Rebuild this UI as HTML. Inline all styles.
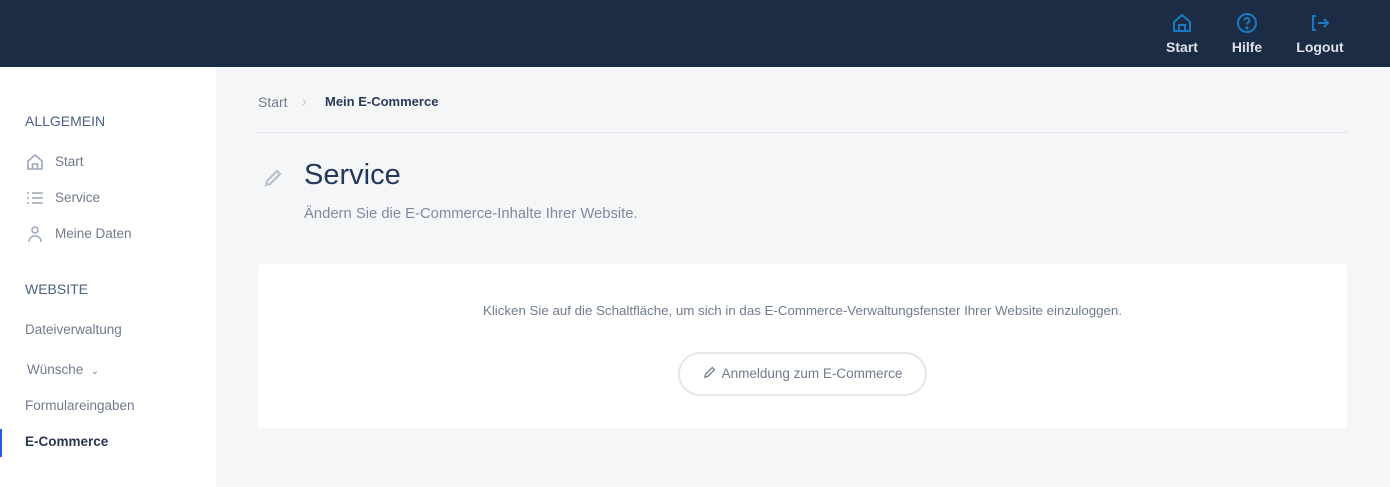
<!DOCTYPE html>
<html><head><meta charset="utf-8"><style>
*{margin:0;padding:0;box-sizing:border-box}
body{width:1390px;height:487px;overflow:hidden;font-family:"Liberation Sans",sans-serif;background:#f5f6f8;position:relative}
.top{position:absolute;left:0;top:0;width:1390px;height:67px;background:#1c2c44}
.nav{position:absolute;top:12px;text-align:center;color:#dde2ea;font-size:14px;font-weight:bold}
.nav svg{display:block;margin:0 auto 5px}
.side{position:absolute;left:0;top:67px;width:216px;height:420px;background:#fff}
.t{position:absolute;font-size:13.5px;color:#6f7b8c}
.h{position:absolute;font-size:14px;color:#4a5f82;left:25px}
.card{position:absolute;left:258px;top:264px;width:1089px;height:164px;background:#fff;border-radius:3px}
</style></head><body>
<div class="top">
 <div class="nav" style="left:1162px;width:40px"><svg width="22" height="22" viewBox="0 0 22 22" fill="none" stroke="#1a7abf" stroke-width="2"><path d="M3 10L11 3l8 7v9H3z"/><path d="M8 19v-6h6v6"/></svg>Start</div>
 <div class="nav" style="left:1227px;width:40px"><svg width="22" height="22" viewBox="0 0 22 22" fill="none" stroke="#1a7abf" stroke-width="2"><circle cx="11" cy="11" r="9"/><path d="M8.5 8.5a2.5 2.5 0 115 0c0 2-2.5 2-2.5 4"/><circle cx="11" cy="16" r=".6" fill="#1a7abf"/></svg>Hilfe</div>
 <div class="nav" style="left:1296px;width:48px"><svg width="22" height="22" viewBox="0 0 22 22" fill="none" stroke="#1a7abf" stroke-width="2"><path d="M7 4H4v14h3"/><path d="M9 11h10M15 7l4 4-4 4"/></svg>Logout</div>
</div>
<div class="side">
 <div class="h" style="top:46px">ALLGEMEIN</div>
 <svg style="position:absolute;left:26px;top:86px" width="18" height="18" viewBox="0 0 18 18" fill="none" stroke="#9aa6b8" stroke-width="1.6"><path d="M2 8l7-6 7 6v8H2z"/><path d="M6.5 16v-5h5v5"/></svg>
 <div class="t" style="left:55px;top:87px">Start</div>
 <svg style="position:absolute;left:26px;top:124px" width="18" height="14" viewBox="0 0 18 14" stroke="#9aa6b8" stroke-width="1.5"><path d="M1 2h2M6 2h11M1 7h2M6 7h11M1 12h2M6 12h11"/></svg>
 <div class="t" style="left:55px;top:123px">Service</div>
 <svg style="position:absolute;left:27px;top:158px" width="16" height="18" viewBox="0 0 16 18" fill="none" stroke="#9aa6b8" stroke-width="1.5"><circle cx="8" cy="5" r="3"/><path d="M2 17c0-4 2.5-6 6-6s6 2 6 6"/></svg>
 <div class="t" style="left:55px;top:159px">Meine Daten</div>
 <div class="h" style="top:214px">WEBSITE</div>
 <div class="t" style="left:25px;top:255px">Dateiverwaltung</div>
 <div class="t" style="left:27px;top:295px">Wünsche &nbsp;<span style="font-size:10px;color:#6f7b8c">&#8964;</span></div>
 <div class="t" style="left:25px;top:331px">Formulareingaben</div>
 <div style="position:absolute;left:0;top:362px;width:2px;height:28px;background:#1a5fe0"></div>
 <div class="t" style="left:25px;top:367px;font-weight:bold;color:#2a3550">E-Commerce</div>
</div>
<div class="t" style="left:258px;top:94px;font-size:14px">Start</div>
<div class="t" style="left:302px;top:93px;font-size:14px;color:#c0c6cf">›</div>
<div class="t" style="left:325px;top:94px;font-size:13px;font-weight:bold;color:#2a3a58">Mein E-Commerce</div>
<div style="position:absolute;left:258px;top:132px;width:1090px;height:1px;background:#e3e7ec"></div>
<svg style="position:absolute;left:262px;top:167px" width="22" height="22" viewBox="0 0 22 22" fill="none" stroke="#b8c0cc" stroke-width="2.2"><path d="M4 18l1-4L15 4l3 3L8 17z"/></svg>
<div style="position:absolute;left:304px;top:159px;font-size:29px;color:#24385e">Service</div>
<div class="t" style="left:304px;top:206px;font-size:14.8px;color:#7d8aa0">Ändern Sie die E-Commerce-Inhalte Ihrer Website.</div>
<div class="card">
 <div class="t" style="left:0;width:1089px;text-align:center;top:39px;font-size:13.3px">Klicken Sie auf die Schaltfläche, um sich in das E-Commerce-Verwaltungsfenster Ihrer Website einzuloggen.</div>
 <div style="position:absolute;left:420px;top:88px;width:249px;height:44px;border:2px solid #e4e6ea;border-radius:22px;text-align:center;line-height:40px;font-size:13.5px;color:#6f7b8c"><svg width="13" height="13" viewBox="0 0 14 14" fill="none" stroke="#6f7b8c" stroke-width="1.4" style="vertical-align:-1px;margin-right:6px"><path d="M2 12l.7-3L10 1.7l2.3 2.3L5 11.3z"/></svg>Anmeldung zum E-Commerce</div>
</div>
</body></html>
